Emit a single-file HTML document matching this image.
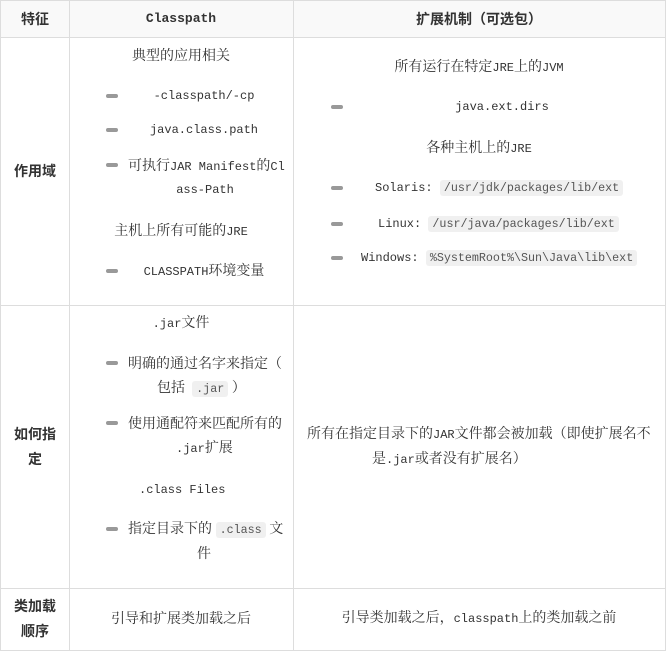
<!DOCTYPE html>
<html><head><meta charset="utf-8"><style>
body{margin:0;width:666px;height:651px;background:#fff;position:relative;overflow:hidden;
font-family:"Noto Serif CJK SC","Noto Sans CJK SC",serif;font-size:14px;color:#333}
.m{font-family:"Liberation Mono",monospace;font-size:12px}
.t{position:absolute;white-space:nowrap;line-height:16px;transform:translate(-50%,-50%)}
.l{position:absolute;white-space:nowrap;line-height:16px;transform:translateY(-50%)}
.b{font-weight:bold;font-family:"Noto Sans CJK SC",sans-serif;font-size:14px}
.bu{position:absolute;width:12px;height:4px;border-radius:2px;background:#999;transform:translateY(-50%)}
.c{background:#f0f0f0;border-radius:3px;padding:1px 4px;color:#555;font-family:"Liberation Mono",monospace;font-size:11.7px}
.hl{position:absolute;left:0;width:666px;height:1px;background:#ddd}
.vl{position:absolute;top:0;height:651px;width:1px;background:#ddd}
</style></head><body>
<div style="position:absolute;left:0;top:0;width:666px;height:37px;background:#f9f9f9"></div>
<div class="hl" style="top:0"></div><div class="hl" style="top:37px"></div>
<div class="hl" style="top:305px"></div><div class="hl" style="top:588px"></div><div class="hl" style="top:650px"></div>
<div class="vl" style="left:0"></div><div class="vl" style="left:69px"></div><div class="vl" style="left:293px"></div><div class="vl" style="left:665px"></div>

<div class="t b" style="left:35px;top:19px">特征</div>
<div class="t" style="left:181px;top:19px;font-weight:bold;font-family:'Liberation Mono',monospace;font-size:13px">Classpath</div>
<div class="t b" style="left:479px;top:19px">扩展机制（可选包）</div>

<div class="t b" style="left:35px;top:171px">作用域</div>
<div class="t" style="left:181px;top:55px">典型的应用相关</div>
<div class="bu" style="left:106px;top:96px"></div><div class="t m" style="left:204px;top:96px">-classpath/-cp</div>
<div class="bu" style="left:106px;top:130px"></div><div class="t m" style="left:204px;top:130px">java.class.path</div>
<div class="bu" style="left:106px;top:165px"></div><div class="l" style="left:128px;top:166px">可执行<span class="m">JAR Manifest</span>的<span class="m">Cl</span></div>
<div class="t m" style="left:205px;top:190px">ass-Path</div>
<div class="t" style="left:181px;top:231px">主机上所有可能的<span class="m">JRE</span></div>
<div class="bu" style="left:106px;top:271px"></div><div class="t" style="left:204px;top:271px"><span class="m">CLASSPATH</span>环境变量</div>

<div class="t" style="left:479px;top:67px">所有运行在特定<span class="m">JRE</span>上的<span class="m">JVM</span></div>
<div class="bu" style="left:331px;top:107px"></div><div class="t m" style="left:502px;top:107px">java.ext.dirs</div>
<div class="t" style="left:479px;top:148px">各种主机上的<span class="m">JRE</span></div>
<div class="bu" style="left:331px;top:188px"></div><div class="l m" style="left:375px;top:188px">Solaris: <span class="c">/usr/jdk/packages/lib/ext</span></div>
<div class="bu" style="left:331px;top:224px"></div><div class="l m" style="left:378px;top:224px">Linux: <span class="c">/usr/java/packages/lib/ext</span></div>
<div class="bu" style="left:331px;top:258px"></div><div class="l m" style="left:361px;top:258px">Windows: <span class="c">%SystemRoot%\Sun\Java\lib\ext</span></div>

<div class="t b" style="left:35px;top:434px">如何指</div>
<div class="t b" style="left:35px;top:459px">定</div>
<div class="t" style="left:181px;top:323px"><span class="m">.jar</span>文件</div>
<div class="bu" style="left:106px;top:363px"></div><div class="l" style="left:128px;top:363px">明确的通过名字来指定（</div>
<div class="l" style="left:157px;top:388px">包括 &nbsp;<span class="c">.jar</span> ）</div>
<div class="bu" style="left:106px;top:423px"></div><div class="l" style="left:128px;top:423px">使用通配符来匹配所有的</div>
<div class="l" style="left:176px;top:448px"><span class="m">.jar</span>扩展</div>
<div class="l m" style="left:139px;top:490px">.class Files</div>
<div class="bu" style="left:106px;top:529px"></div><div class="l" style="left:128px;top:529px">指定目录下的 <span class="c">.class</span> 文</div>
<div class="l" style="left:197px;top:553px">件</div>
<div class="l" style="left:307px;top:434px">所有在指定目录下的<span class="m">JAR</span>文件都会被加载（即使扩展名不</div>
<div class="l" style="left:372px;top:459px">是<span class="m">.jar</span>或者没有扩展名）</div>

<div class="t b" style="left:35px;top:606px">类加载</div>
<div class="t b" style="left:35px;top:631px">顺序</div>
<div class="t" style="left:181px;top:618px">引导和扩展类加载之后</div>
<div class="t" style="left:479px;top:618px">引导类加载之后，<span class="m">classpath</span>上的类加载之前</div>
</body></html>
